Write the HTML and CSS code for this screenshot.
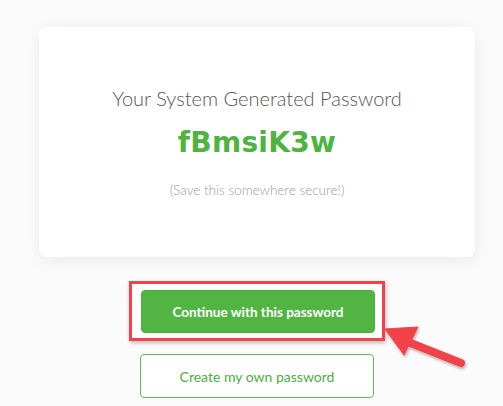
FILE: index.html
```html
<!DOCTYPE html>
<html>
<head>
<meta charset="utf-8">
<link rel="stylesheet" href="styles.css">
</head>
<body>
<div class="page">
  <div class="col">
    <div class="card">
      <div class="title">Your System Generated Password</div>
      <div class="password">fBmsiK3w</div>
      <div class="note">(Save this somewhere secure!)</div>
    </div>
    <div class="highlight">
      <button class="btn btn-primary">Continue with this password</button>
    </div>
    <button class="btn btn-outline">Create my own password</button>
  </div>
  <svg class="arrow" width="100" height="60" viewBox="380 320 100 60" xmlns="http://www.w3.org/2000/svg">
    <defs>
      <filter id="sh" x="-20%" y="-20%" width="150%" height="160%">
        <feDropShadow dx="1" dy="2" stdDeviation="1.5" flood-color="#000" flood-opacity="0.3"/>
      </filter>
    </defs>
    <g filter="url(#sh)" fill="#f2434a" stroke="#f2434a">
      <polygon points="385,329 418,327 404,355" stroke-linejoin="round" stroke-width="1"/>
      <line x1="403" y1="340" x2="461" y2="363" stroke-width="8" stroke-linecap="round"/>
    </g>
  </svg>
</div>
</body>
</html>
```
FILE: styles.css
```css
html, body {
  margin: 0;
  padding: 0;
}
body {
  background: #fbfbfb;
  font-family: Lato, "Liberation Sans", sans-serif;
}
.page {
  position: relative;
  width: 503px;
  height: 406px;
  box-sizing: border-box;
  padding: 27px 0 0 39px;
  overflow: hidden;
}
.col {
  width: 436px;
  display: flex;
  flex-direction: column;
  align-items: center;
}
.card {
  width: 436px;
  height: 230px;
  background: #fff;
  border-radius: 8px;
  box-shadow: 0 3px 18px rgba(0, 0, 0, 0.08);
  display: flex;
  flex-direction: column;
  align-items: center;
  justify-content: center;
}
.title {
  font-size: 20px;
  font-weight: 300;
  color: #555;
  line-height: 24px;
}
.password {
  font-family: "DejaVu Sans", Lato, sans-serif;
  font-size: 28px;
  font-weight: 700;
  letter-spacing: 0.3px;
  color: #4db43f;
  line-height: 34px;
  margin-top: 16px;
}
.note {
  font-size: 13.5px;
  font-weight: 300;
  color: #9a9a9a;
  line-height: 16px;
  margin-top: 22px;
}
.highlight {
  margin-top: 24px;
  border: 3px solid #f2434a;
  padding: 6px 7px 5px 9px;
  box-shadow: 1px 2px 4px rgba(0, 0, 0, 0.25);
  background: #fff;
}
.btn {
  display: block;
  width: 234px;
  height: 43px;
  box-sizing: border-box;
  border-radius: 4px;
  font-family: Lato, "Liberation Sans", sans-serif;
  font-size: 13.5px;
  cursor: pointer;
}
.btn-primary {
  background: #52b543;
  border: 1px solid #4cae3e;
  color: #fff;
  font-weight: 700;
}
.btn-outline {
  margin-top: 13px;
  height: 44px;
  background: #fff;
  border: 1px solid #5fbb52;
  color: #4cae3e;
  font-weight: 400;
  font-size: 14px;
}
.arrow {
  position: absolute;
  left: 380px;
  top: 320px;
}
```
